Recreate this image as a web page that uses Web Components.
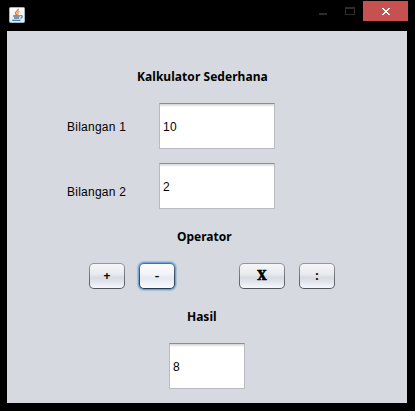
<!DOCTYPE html>
<html lang="id">
<head>
<meta charset="utf-8">
<title>Kalkulator</title>
<style>
html,body{margin:0;height:100%;background:#000;overflow:hidden}
</style>
</head>
<body>
<calc-window></calc-window>
<script>
function define(name, html) {
  const template = document.createElement('template');
  template.innerHTML = html;
  customElements.define(name, class extends HTMLElement {
    constructor() {
      super();
      this.attachShadow({mode: 'open'}).append(template.content.cloneNode(true));
    }
  });
}

define('java-icon', `
<style>:host{display:block;width:16px;height:16px}svg{display:block}</style>
<svg width="16" height="16" viewBox="0 0 16 16" fill="none">
  <defs><linearGradient id="g" x2="0" y2="1"><stop stop-color="#fff"/><stop offset="1" stop-color="#e3e9ee"/></linearGradient></defs>
  <rect x=".5" y=".5" width="15" height="15" rx="1" fill="url(#g)" stroke="#9fb6c6"/>
  <path d="M9.3 1.8C9.8 4 5.8 4.5 6.5 6.3C6.7 7 7.4 7.4 7.7 8.2" stroke="#e87722" stroke-width="1.4"/>
  <path d="M10.6 4.4C8.4 5.1 8.3 5.8 9 6.6C9.3 7.2 8.9 7.7 8.5 8.2" stroke="#ec8a3c" stroke-width="1.1"/>
  <path d="M4.2 9H10.8M5 11H10.2M3.2 13.4H11.5" stroke="#4d7b99" stroke-width="1.3"/>
  <path d="M11.2 8.7C14 8.2 13.8 10.9 11.2 11.2" stroke="#4d7b99" stroke-width="1.1"/>
</svg>`);

define('window-controls', `
<style>:host{display:flex}svg{display:block}.close{background:#c75050;width:45px;height:20px}</style>
<svg width="44" height="20" viewBox="0 0 44 20" shape-rendering="crispEdges">
  <path d="M0 12h8v2H0z" fill="#2d2d2d"/>
  <path d="M26 6h10v8H26zM27 8v5h8V8z" fill="#2d2d2d" fill-rule="evenodd"/>
</svg>
<svg class="close" viewBox="0 0 45 20" shape-rendering="crispEdges" fill="#fff">
  <path d="M19 7h2v1h1v1h2v-1h1v-1h2v1h-1v1h-1v1h-1v1h1v1h1v1h1v1h-2v-1h-1v-1h-2v1h-1v1h-2v-1h1v-1h1v-1h1v-1h-1v-1h-1v-1h-1z"/>
</svg>`);

define('title-bar', `
<style>:host{display:flex;justify-content:space-between;height:31px;padding:0 7px 0 9px;box-sizing:border-box}
java-icon{margin-top:7px}window-controls{margin-top:1px}</style>
<java-icon></java-icon><window-controls></window-controls>`);

define('section-title', `
<style>:host{display:block;white-space:nowrap;font:bold 12px/16px "Noto Sans","Open Sans",sans-serif;color:#000;letter-spacing:var(--track,0)}</style><slot></slot>`);

define('field-label', `
<style>:host{display:block;white-space:nowrap;font:12px/16px "Liberation Sans",Arial,sans-serif;letter-spacing:.25px;color:#000}</style><slot></slot>`);

define('text-field', `
<style>:host{display:flex;align-items:center;box-sizing:border-box;width:116px;height:46px;padding:2px 0 0 3px;
background:linear-gradient(#d2d3d5,#fff 3px) #fff;border:1px solid #b9bbc0;border-top-color:#8d8e91;
font:12px/16px "Liberation Sans",Arial,sans-serif;color:#000;letter-spacing:.25px}</style><slot></slot>`);

define('push-button', `
<style>:host{display:flex;align-items:center;justify-content:center;box-sizing:border-box;width:36px;height:26px;border-radius:5px;
padding-bottom:1px;border:1px solid transparent;
background:linear-gradient(#f5f6f8,#e9ebef 40%,#d8dbe1 58%,#e2e5eb 75%,#f6f8fe) padding-box,linear-gradient(#96989d,#51545b) border-box;
font:bold 12px/16px "Noto Sans","Open Sans",sans-serif;color:#000}
:host([focused]){font-weight:500;font-size:14px;background:linear-gradient(#fcfdfe,#f2f4f8 40%,#e5e9f0 60%,#f9fbff) padding-box,linear-gradient(#55718b,#25384c) border-box;box-shadow:0 0 0 1px #73a4d1,0 0 1px 2px #a5c0dc}
:host([wide]){width:46px;font-family:"DejaVu Serif","Liberation Serif",serif;-webkit-text-stroke:.6px #000}</style><slot></slot>`);

define('calc-window', `
<style>
:host{display:block;width:415px;height:411px;background:#000}
main{box-sizing:border-box;width:400px;height:372px;margin-left:7px;background:#d6d9df;display:flex;flex-direction:column;padding-top:38px}
.row{display:flex;align-items:flex-start;padding-left:60px}
field-label{width:92px}
.title{margin-left:130px;--track:.05px}
.ops{padding-left:82px;gap:14px;margin-top:18px}
.wide{margin-left:50px}
.answer{width:76px;margin:18px 0 0 162px}
</style>
<title-bar></title-bar>
<main>
  <section-title class="title">Kalkulator Sederhana</section-title>
  <div class="row" style="margin-top:18px"><field-label style="padding-top:16px">Bilangan 1</field-label><text-field>10</text-field></div>
  <div class="row" style="margin-top:14px"><field-label style="padding-top:21px">Bilangan 2</field-label><text-field>2</text-field></div>
  <section-title style="margin:20px 0 0 170px">Operator</section-title>
  <div class="row ops"><push-button>+</push-button><push-button focused>-</push-button><push-button wide class="wide">X</push-button><push-button>:</push-button></div>
  <section-title style="margin:20px 0 0 180px">Hasil</section-title>
  <text-field class="answer">8</text-field>
</main>`);
</script>
</body>
</html>
